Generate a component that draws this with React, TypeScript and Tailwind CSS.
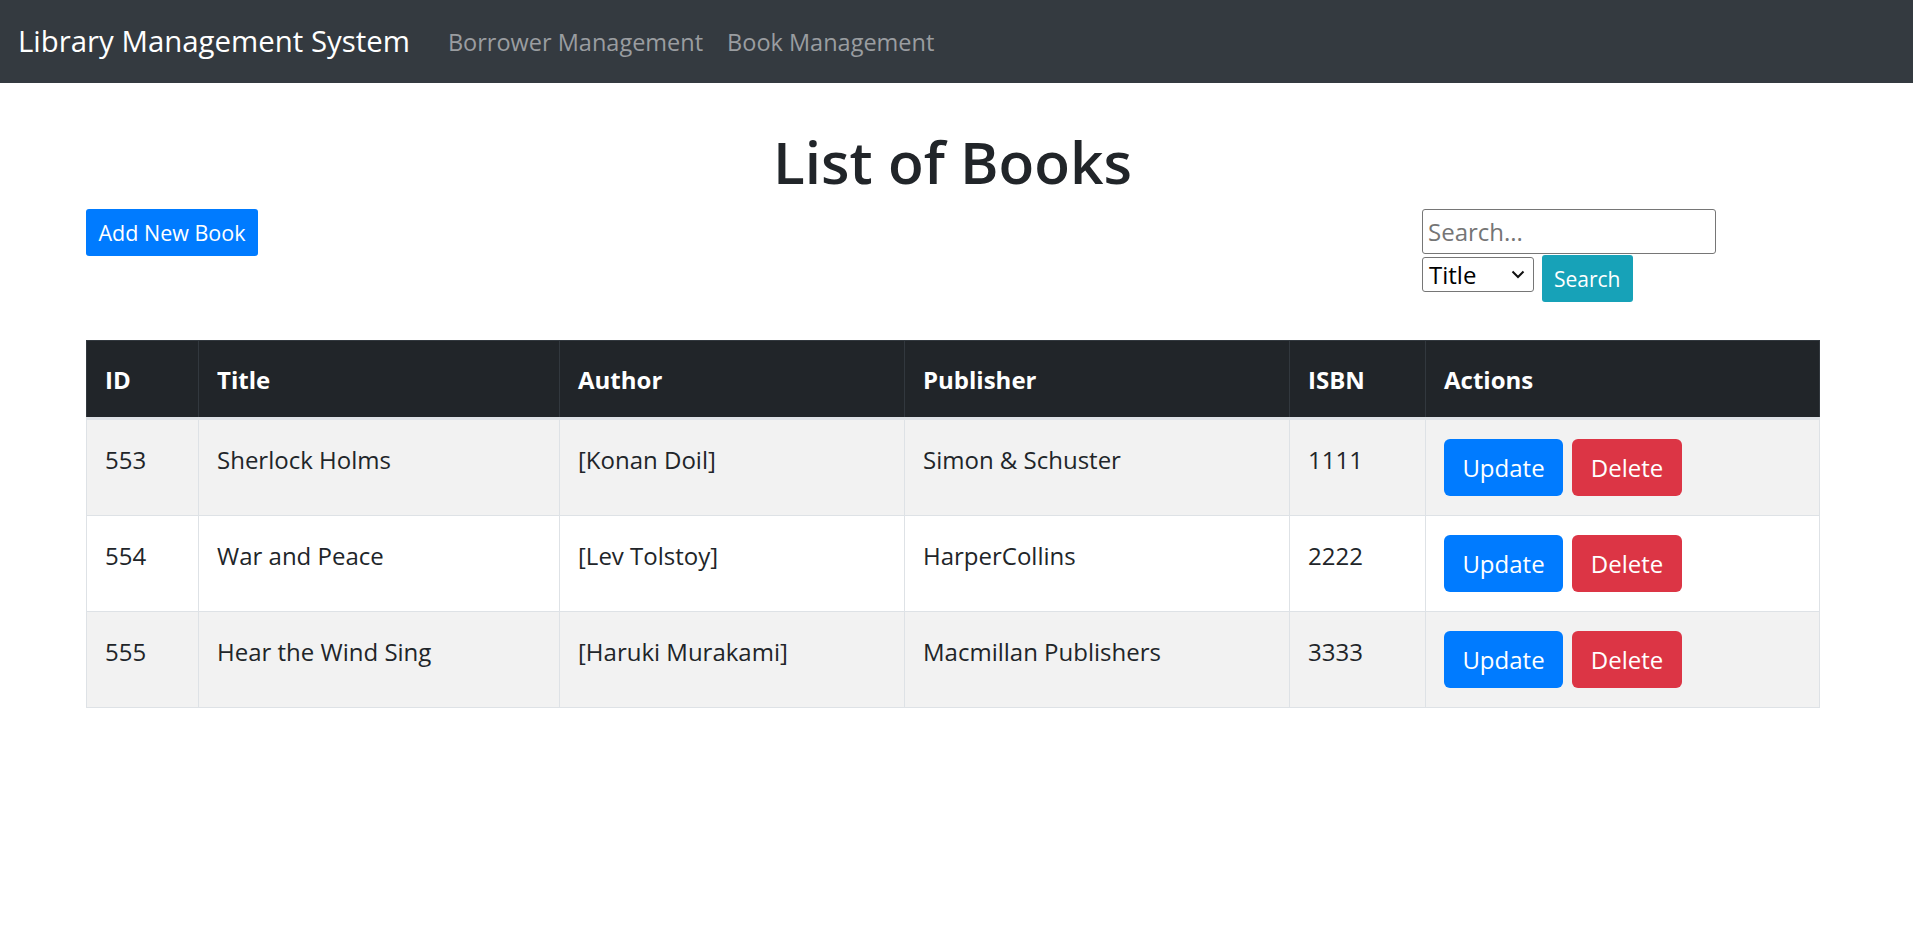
import React from "react";

const books = [
  { id: 553, title: "Sherlock Holms", author: "[Konan Doil]", publisher: "Simon & Schuster", isbn: "1111", striped: true },
  { id: 554, title: "War and Peace", author: "[Lev Tolstoy]", publisher: "HarperCollins", isbn: "2222", striped: false },
  { id: 555, title: "Hear the Wind Sing", author: "[Haruki Murakami]", publisher: "Macmillan Publishers", isbn: "3333", striped: true },
];

export default function App() {
  return (
    <div className="min-h-[931px] bg-white text-[#212529]" style={{ fontFamily: '"Open Sans", "Noto Sans", sans-serif' }}>
      <nav className="flex h-[83px] items-center bg-[#343a40] pl-[18px]">
        <span className="mr-[26px] text-[29.4px] leading-[45px] text-white">Library Management System</span>
        <a className="px-[12px] text-[23.5px] leading-[36px] text-[#9a9da0]">Borrower Management</a>
        <a className="px-[12px] text-[23.5px] leading-[36px] text-[#9a9da0]">Book Management</a>
      </nav>

      <div className="ml-[86px] w-[1733px]">
        <h1 className="mt-[42px] mb-[12px] text-center text-[58.5px] font-semibold leading-[72px]">List of Books</h1>
        <div className="flex items-start justify-between">
          <button className="h-[47px] w-[172px] rounded-[3px] bg-[#007bff] text-[21.5px] leading-[32px] text-white">
            Add New Book
          </button>
          <div className="mr-[103px] flex w-[294px] flex-col">
            <input
              placeholder="Search..."
              className="h-[45px] w-[294px] rounded-[3px] border border-[#767676] px-[5px] text-[24px] leading-[36px] placeholder:text-[#757575]"
            />
            <div className="mt-[1px] flex items-start gap-[8px]">
              <div className="relative mt-[2px] h-[35px] w-[112px] rounded-[3px] border border-[#767676] bg-white">
                <span className="absolute left-[6px] top-[-1px] text-[24px] leading-[36px] text-black">Title</span>
                <svg className="absolute right-[8px] top-[12px]" width="14" height="9" viewBox="0 0 14 9">
                  <path d="M1.5 1.5 L7 7 L12.5 1.5" fill="none" stroke="#111" strokeWidth="2" />
                </svg>
              </div>
              <button className="h-[47px] rounded-[3px] bg-[#17a2b8] px-[12px] text-[21px] leading-[32px] text-white">
                Search
              </button>
            </div>
          </div>
        </div>

        <table className="mt-[38px] w-[1733px] table-fixed border-collapse text-[24px] leading-[36px]">
          <colgroup>
            <col className="w-[112px]" />
            <col className="w-[361px]" />
            <col className="w-[345px]" />
            <col className="w-[385px]" />
            <col className="w-[136px]" />
            <col className="w-[394px]" />
          </colgroup>
          <thead>
            <tr className="bg-[#212529] text-white">
              {["ID", "Title", "Author", "Publisher", "ISBN", "Actions"].map((h) => (
                <th
                  key={h}
                  className="border border-[#32383e] border-b-[3px] border-b-[#dee2e6] px-[18px] pt-[21px] pb-[19px] text-left font-bold"
                >
                  {h}
                </th>
              ))}
            </tr>
          </thead>
          <tbody>
            {books.map((b) => (
              <tr key={b.id} className={b.striped ? "bg-[#f2f2f2]" : "bg-white"}>
                <td className="border border-[#dee2e6] px-[18px] pt-[22px] pb-[18px] align-top">{b.id}</td>
                <td className="border border-[#dee2e6] px-[18px] pt-[22px] pb-[18px] align-top">{b.title}</td>
                <td className="border border-[#dee2e6] px-[18px] pt-[22px] pb-[18px] align-top">{b.author}</td>
                <td className="border border-[#dee2e6] px-[18px] pt-[22px] pb-[18px] align-top">{b.publisher}</td>
                <td className="border border-[#dee2e6] px-[18px] pt-[22px] pb-[18px] align-top">{b.isbn}</td>
                <td className="border border-[#dee2e6] px-[18px] pt-[19px] pb-[19px] align-top">
                  <div className="flex gap-[9px]">
                    <button className="h-[57px] w-[119px] rounded-[6px] bg-[#007bff] text-[24px] leading-[36px] text-white">
                      Update
                    </button>
                    <button className="h-[57px] w-[110px] rounded-[6px] bg-[#dc3545] text-[24px] leading-[36px] text-white">
                      Delete
                    </button>
                  </div>
                </td>
              </tr>
            ))}
          </tbody>
        </table>
      </div>
    </div>
  );
}
